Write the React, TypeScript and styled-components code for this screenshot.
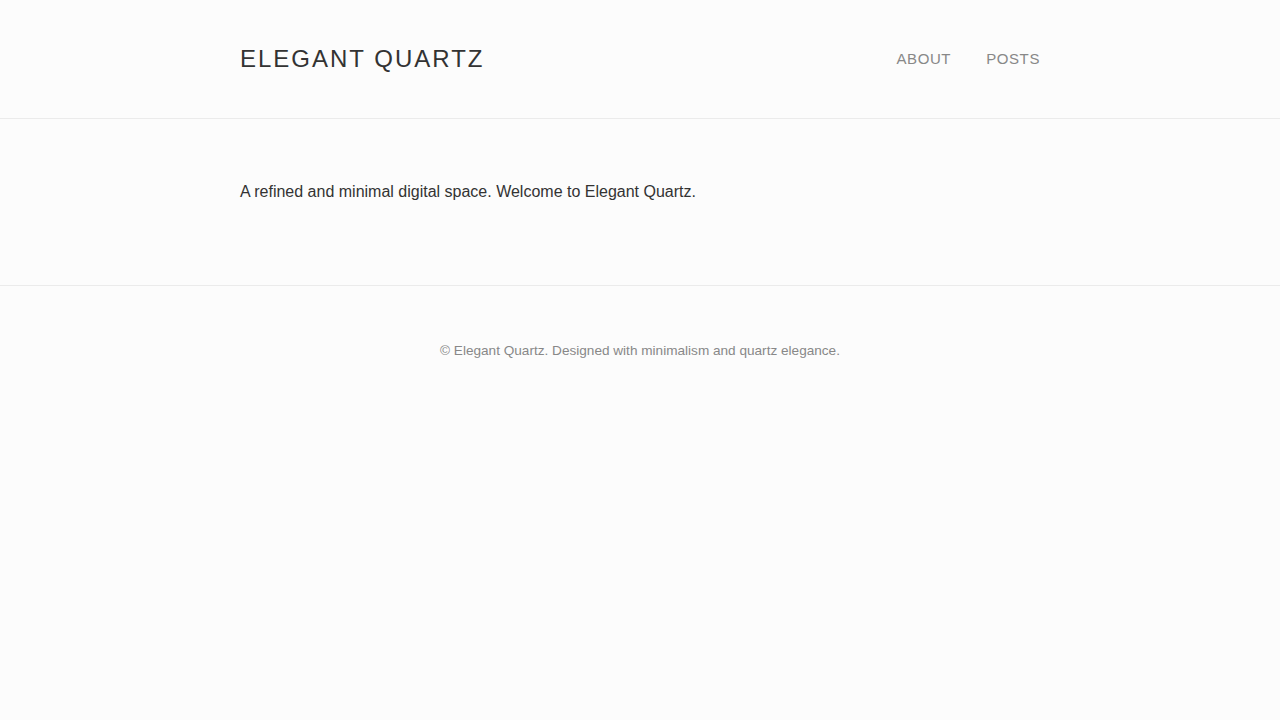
import { FunctionComponent } from 'react';
import styled, { createGlobalStyle } from 'styled-components';

const GlobalStyle = createGlobalStyle`
  html, body {
    margin: 0;
    padding: 0;
    background: #fcfcfc;
    font-family: "Liberation Sans", Arial, sans-serif;
    color: #333;
  }
`;

const Page = styled.div`
  min-height: 720px;
  background: #fcfcfc;
`;

const Container = styled.div`
  width: 800px;
  margin: 0 auto;
`;

const Header = styled.header`
  border-bottom: 1px solid #ebebeb;
`;

const HeaderInner = styled(Container)`
  display: flex;
  align-items: center;
  justify-content: space-between;
  height: 118px;
`;

const Logo = styled.h1`
  margin: 0;
  font-size: 24px;
  font-weight: 400;
  letter-spacing: 2px;
  color: #333;
`;

const Nav = styled.nav`
  display: flex;
  gap: 35px;
  margin-top: -2px;
`;

const NavLink = styled.a`
  font-size: 15px;
  letter-spacing: 0.6px;
  text-transform: uppercase;
  color: #888;
  text-decoration: none;
`;

const Main = styled.main`
  border-bottom: 1px solid #ebebeb;
`;

const MainInner = styled(Container)`
  padding: 60px 0 81px;
`;

const Intro = styled.p`
  margin: 0;
  font-size: 16px;
  line-height: 25px;
  color: #333;
`;

const Footer = styled.footer`
  padding: 55px 0;
  text-align: center;
`;

const FooterText = styled.p`
  margin: 0;
  font-size: 13.6px;
  line-height: 20px;
  color: #888;
`;

const App: FunctionComponent = () => (
  <Page>
    <GlobalStyle />
    <Header>
      <HeaderInner>
        <Logo>ELEGANT QUARTZ</Logo>
        <Nav>
          <NavLink href="#">About</NavLink>
          <NavLink href="#">Posts</NavLink>
        </Nav>
      </HeaderInner>
    </Header>
    <Main>
      <MainInner>
        <Intro>A refined and minimal digital space. Welcome to Elegant Quartz.</Intro>
      </MainInner>
    </Main>
    <Footer>
      <FooterText>© Elegant Quartz. Designed with minimalism and quartz elegance.</FooterText>
    </Footer>
  </Page>
);

export default App;
